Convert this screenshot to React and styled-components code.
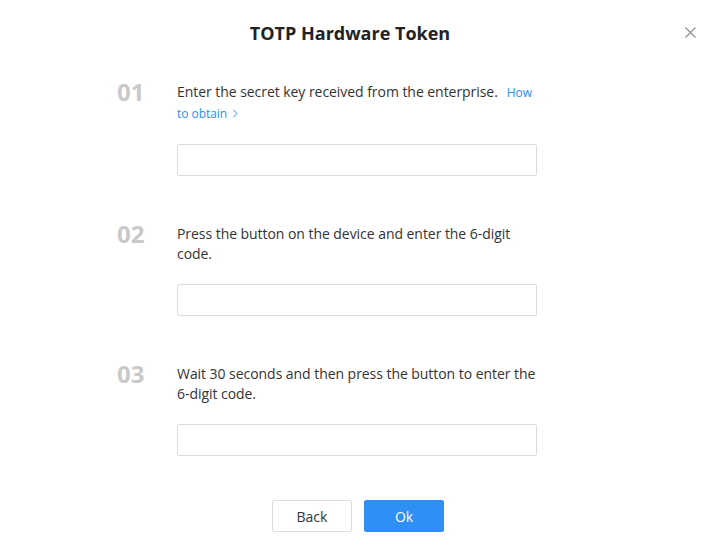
import React from 'react';
import styled, { createGlobalStyle } from 'styled-components';

const GlobalStyle = createGlobalStyle`
    html, body {
        margin: 0;
        padding: 0;
        background: #fff;
    }
    body {
        font-family: "Open Sans", "Noto Sans", sans-serif;
        color: #333;
    }
`;

const Dialog = styled.div`
    position: relative;
    width: 718px;
    height: 555px;
    box-sizing: border-box;
    background: #fff;
    display: flex;
    flex-direction: column;
`;

const Header = styled.div`
    height: 64px;
    display: flex;
    align-items: center;
    justify-content: center;
    font-size: 18px;
    font-weight: 700;
    color: #222;
    padding: 1px 18px 0 0;
    box-sizing: border-box;
`;

const Close = styled.button`
    position: absolute;
    top: 24px;
    right: 20px;
    width: 16px;
    height: 16px;
    padding: 0;
    border: 0;
    background: none;
    cursor: pointer;
    display: flex;
    align-items: center;
    justify-content: center;
`;

const Steps = styled.div`
    display: flex;
    flex-direction: column;
    gap: 48px;
    padding: 18px 0 0 117px;
`;

const Step = styled.div`
    display: flex;
    align-items: flex-start;
`;

const Num = styled.div`
    width: 60px;
    font-size: 24px;
    font-weight: 700;
    line-height: 26px;
    color: #c9c9c9;
    margin-top: -3px;
`;

const Body = styled.div`
    width: 366px;
    display: flex;
    flex-direction: column;
    gap: 20px;
`;

const Text = styled.div`
    font-size: 14px;
    line-height: 20px;
    color: #333;
    min-height: 40px;
    letter-spacing: -0.05px;
`;

const Link = styled.a`
    font-size: 12px;
    color: #2b8ef0;
    text-decoration: none;
    margin-left: 9px;
`;

const Input = styled.input`
    width: 360px;
    height: 32px;
    box-sizing: border-box;
    border: 1px solid #dcdcdc;
    border-radius: 2px;
    outline: none;
    padding: 0 10px;
    font: inherit;
    font-size: 14px;
`;

const Footer = styled.div`
    display: flex;
    justify-content: center;
    gap: 12px;
    margin-top: 44px;
    padding-right: 2px;
`;

const Button = styled.button`
    width: 80px;
    height: 32px;
    box-sizing: border-box;
    border-radius: 2px;
    font-family: inherit;
    font-size: 14px;
    cursor: pointer;
    border: 1px solid ${p => (p.$primary ? '#2e8ff5' : '#dcdcdc')};
    background: ${p => (p.$primary ? '#2e8ff5' : '#fff')};
    color: ${p => (p.$primary ? '#fff' : '#333')};
`;

const steps = [
    {
        num: '01',
        text: 'Enter the secret key received from the enterprise.',
        link: true,
    },
    {
        num: '02',
        text: 'Press the button on the device and enter the 6-digit code.',
    },
    {
        num: '03',
        text: 'Wait 30 seconds and then press the button to enter the 6-digit code.',
    },
];

export default function App() {
    return (
        <>
            <GlobalStyle />
            <Dialog>
                <Header>TOTP Hardware Token</Header>
                <Close aria-label="close">
                    <svg width="11" height="11" viewBox="0 0 11 11">
                        <path
                            d="M0.5 0.5L10.5 10.5M10.5 0.5L0.5 10.5"
                            stroke="#8c8c8c"
                            strokeWidth="1.1"
                        />
                    </svg>
                </Close>
                <Steps>
                    {steps.map(s => (
                        <Step key={s.num}>
                            <Num>{s.num}</Num>
                            <Body>
                                <Text>
                                    {s.text}
                                    {s.link ? (
                                        <Link href="#">
                                            How to obtain{' '}
                                            <svg
                                                width="7"
                                                height="9"
                                                viewBox="0 0 7 9"
                                                style={{ marginLeft: 2 }}
                                            >
                                                <path
                                                    d="M1.5 0.8L5 4.5L1.5 8.2"
                                                    fill="none"
                                                    stroke="#2b8ef0"
                                                    strokeWidth="1"
                                                />
                                            </svg>
                                        </Link>
                                    ) : null}
                                </Text>
                                <Input />
                            </Body>
                        </Step>
                    ))}
                </Steps>
                <Footer>
                    <Button>Back</Button>
                    <Button $primary>Ok</Button>
                </Footer>
            </Dialog>
        </>
    );
}
